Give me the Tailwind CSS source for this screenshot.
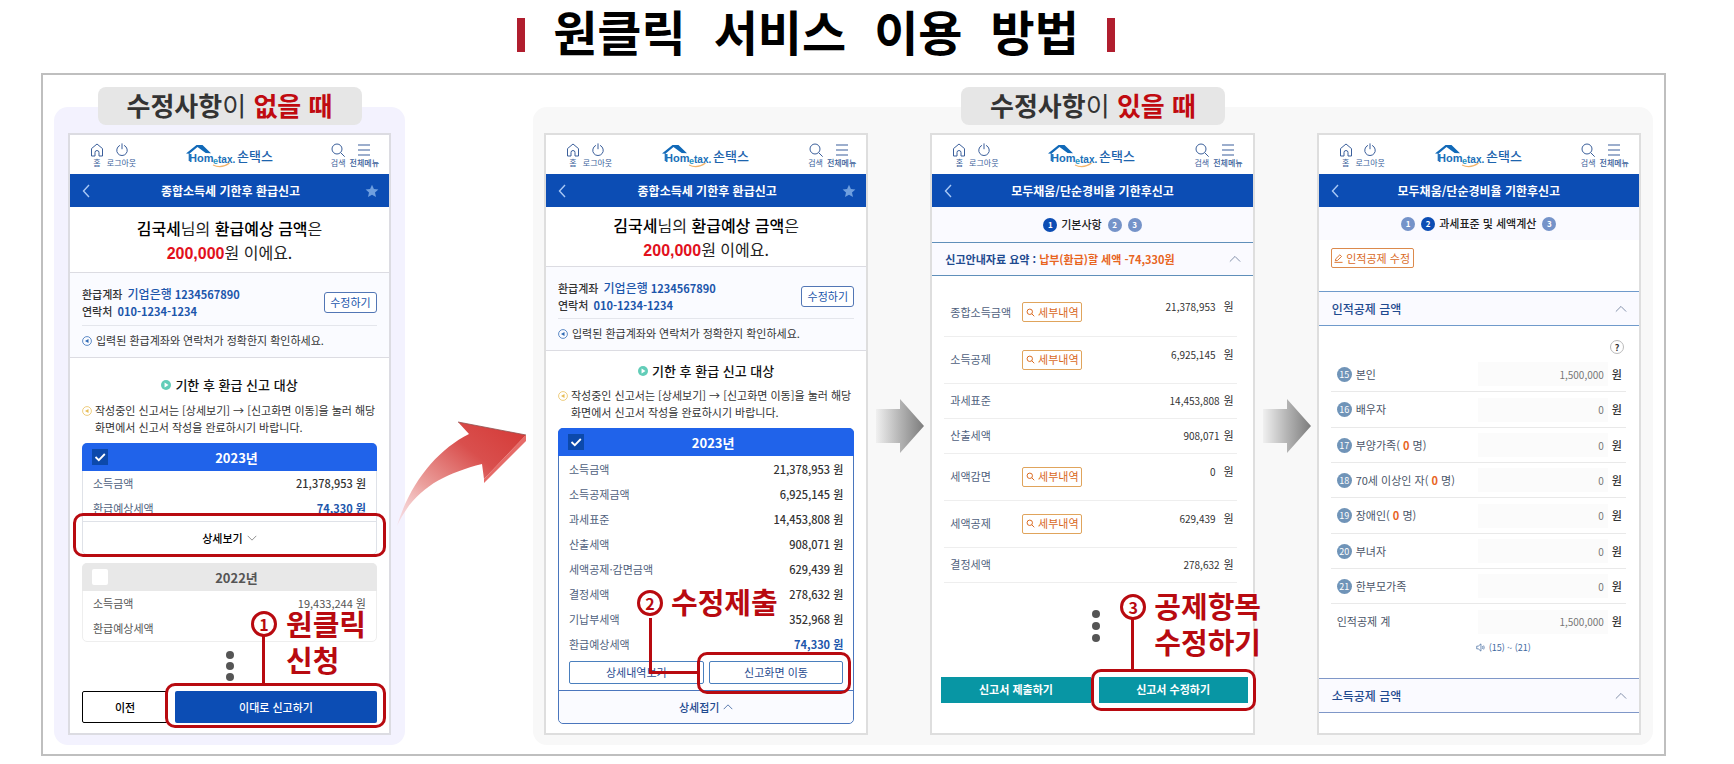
<!DOCTYPE html>
<html lang="ko">
<head>
<meta charset="utf-8">
<title>원클릭 서비스 이용 방법</title>
<script src="https://cdn.jsdelivr.net/npm/@tailwindcss/browser@4"></script>
</head>
<body class="bg-white text-[11px] leading-[17px] text-[#333] font-['Noto_Sans_CJK_KR',sans-serif]">

<svg class="hidden" aria-hidden="true">
  <symbol id="home" viewBox="0 0 14 14"><path d="M1.500 5.600 7 1l5.500 4.600V13H9V9.500a2 2 0 0 0-4 0V13H1.500z" fill="none" stroke="currentColor" stroke-linejoin="round"/></symbol>
  <symbol id="power" viewBox="0 0 14 14"><path d="M4.600 2.500a5.300 5.300 0 1 0 4.800 0M7 .8v5" fill="none" stroke="currentColor" stroke-linecap="round"/></symbol>
  <symbol id="search" viewBox="0 0 14 14"><circle cx="6" cy="6" r="5" fill="none" stroke="currentColor"/><path d="m9.700 9.700 4 4" stroke="currentColor" fill="none"/></symbol>
  <symbol id="menu" viewBox="0 0 14 14"><path d="M1 2h12M1 7h12M1 12h12" stroke="currentColor" stroke-width="1.200" fill="none"/></symbol>
  <symbol id="back" viewBox="0 0 8 14"><path d="M7 1 1.500 7 7 13" fill="none" stroke="currentColor" stroke-width="1.400"/></symbol>
  <symbol id="star" viewBox="0 0 14 14"><path d="m7 .8 1.900 4.200 4.500.5-3.400 3 1 4.600L7 10.700l-4 2.400 1-4.600-3.400-3 4.500-.5z" fill="currentColor"/></symbol>
  <symbol id="up" viewBox="0 0 14 8"><path d="m1 7 6-6 6 6" fill="none" stroke="currentColor"/></symbol>
  <symbol id="info" viewBox="0 0 12 12"><circle cx="6" cy="6" r="5.300" fill="none" stroke="currentColor" stroke-width=".9"/><path d="M7.800 3.600v4.800L3.600 6z" fill="currentColor"/></symbol>
  <symbol id="play" viewBox="0 0 12 12"><circle cx="6" cy="6" r="6" fill="currentColor"/><path d="M4.300 3v6L9 6z" fill="#fff"/></symbol>
  <symbol id="lens" viewBox="0 0 10 10"><circle cx="4.200" cy="4.200" r="3" fill="none" stroke="currentColor" stroke-width="1.100"/><path d="m6.400 6.400 2.800 2.800" stroke="currentColor" stroke-width="1.100"/></symbol>
  <symbol id="tick" viewBox="0 0 16 16"><path d="m3.500 8 3.300 3.200 6-6.200" fill="none" stroke="#fff" stroke-width="1.800"/></symbol>
  <symbol id="logo" viewBox="0 0 88 24">
    <path d="M0 9.500 10.500 1h6L25 9.300l-5.300-.4-8.200-6L3.400 9.700z" fill="#1169b8"/>
    <path d="M3.300 9.500V17" stroke="#1169b8" stroke-width="1.200"/>
    <path d="M27 21q8.500 4 16.500-2" fill="none" stroke="#f3b36b" stroke-width="1.200"/>
    <text y="17.500" x="3" font-family="Liberation Sans, sans-serif" font-weight="700" font-size="11" fill="#1a6fb8">Hom</text>
    <text y="20" x="27" font-family="Liberation Sans, sans-serif" font-weight="700" font-size="9" fill="#1f93c4">e</text>
    <text y="18.500" x="32" font-family="Liberation Sans, sans-serif" font-weight="700" font-size="10" fill="#1a6fb8">tax.</text>
    <text y="16.500" x="51" font-family="Noto Sans CJK KR, sans-serif" font-weight="500" font-size="13" fill="#1d64ad">손택스</text>
  </symbol>
</svg>

<h1 class="flex h-[73px] items-start justify-center gap-7 pr-[102px] text-[48px] leading-[60px] font-bold text-black">
  <span class="mt-[18px] h-[34px] w-2 bg-[#b01e2e]" aria-hidden="true"></span>
  <span>원클릭</span> <span>서비스</span> <span>이용</span> <span>방법</span>
  <span class="mt-[18px] h-[34px] w-2 bg-[#b01e2e]" aria-hidden="true"></span>
</h1>

<main class="ml-[41px] mr-[68px] flex border-2 border-[#bfbfbf] px-[11px] pt-3 pb-[9px]">

  <!-- Nothing to correct -->
  <section class="flex min-w-0 flex-[351] flex-col">
    <h2 class="relative z-10 -mb-[18px] flex h-[38px] w-[264px] items-center justify-center self-center rounded-lg bg-[#e6e6e6] pb-1 text-[26px] font-bold text-[#333]"><span>수정사항<span class="font-normal">이</span> <span class="text-[#c00a10]">없을 때</span></span></h2>
    <div class="flex flex-1 rounded-[14px] bg-[#f3f2fe] px-[14px] pt-[26px] pb-[10px]">

      <article class="relative min-w-0 flex-1 border-2 border-[#dcdce2] bg-white">
        <header class="grid h-[39px] grid-cols-[1fr_auto_1fr] text-[8px] leading-[10px] text-[#3b5f9b]">
          <div class="flex items-start pt-2 pl-[18px]">
            <button class="flex w-[18px] flex-col items-center gap-px"><svg class="size-[14px]"><use href="#home"/></svg>홈</button>
            <button class="flex w-[31px] flex-col items-center gap-px"><svg class="size-[14px]"><use href="#power"/></svg>로그아웃</button>
          </div>
          <svg class="mt-[9px] h-6 w-[88px]" role="img" aria-label="Hometax 손택스"><use href="#logo"/></svg>
          <div class="flex items-start justify-end gap-1 pt-2 pr-[10px]">
            <button class="flex flex-col items-center gap-px"><svg class="size-[14px]"><use href="#search"/></svg>검색</button>
            <button class="flex flex-col items-center gap-px font-medium"><svg class="size-[14px]"><use href="#menu"/></svg>전체메뉴</button>
          </div>
        </header>
        <div class="flex h-[33px] items-center justify-between bg-[#0c4db4] pr-[10px] pl-3 text-white">
          <button class="w-[14px] text-[#a9c8f5]" aria-label="뒤로"><svg class="h-[14px] w-2"><use href="#back"/></svg></button>
          <h3 class="text-xs font-bold">종합소득세 기한후 환급신고</h3>
          <button class="text-[#6f9fdf]" aria-label="즐겨찾기"><svg class="size-[14px]"><use href="#star"/></svg></button>
        </div>
        <p class="h-[66px] border-b border-[#dcdce2] pt-[9px] text-center text-base leading-6 text-[#222]"><b class="font-medium text-black">김국세</b>님의 <b class="font-medium text-black">환급예상 금액</b>은<br><b class="font-['Liberation_Sans',sans-serif] text-[#e2101c]">200,000</b>원 이에요.</p>
        <div class="border-b border-[#dcdce2] bg-[#fafbff] px-3 pt-3 pb-2">
          <div class="flex items-center justify-between border-b border-[#e4e6ec] pb-[5px]">
            <p class="font-medium">환급계좌 <b class="ml-[2px] text-[#1c56ab]"><span class="text-xs leading-[17px] font-medium">기업은행</span> 1234567890</b><br>연락처 <b class="ml-[2px] text-[#1c56ab]">010-1234-1234</b></p>
            <button class="h-[21px] w-[53px] rounded-[3px] border border-[#5276b5] bg-white text-[#1c56ab]">수정하기</button>
          </div>
          <p class="flex items-center gap-1 pt-[6px]"><svg class="size-[10px] text-[#2c68b4]"><use href="#info"/></svg>입력된 환급계좌와 연락처가 정확한지 확인하세요.</p>
        </div>
        <div class="px-3 pb-[10px]">
          <h4 class="mt-[17px] flex items-center justify-center gap-1 text-[13px] leading-5 font-medium text-[#111]"><svg class="size-[10px] text-[#62cdb8]"><use href="#play"/></svg>기한 후 환급 신고 대상</h4>
          <p class="mt-[7px] flex gap-[3px] whitespace-nowrap"><svg class="mt-[4px] size-[10px] shrink-0 text-[#e8bd55]"><use href="#info"/></svg><span>작성중인 신고서는 [상세보기] → [신고화면 이동]을 눌러 해당<br>화면에서 신고서 작성을 완료하시기 바랍니다.</span></p>

          <div class="mt-[7px] rounded-[5px] border border-[#dfe2e8]">
            <div class="relative -mx-px -mt-px flex h-7 items-center justify-center rounded-t-[5px] bg-[#2063ea] pl-[14px] text-[13px] font-bold text-white">
              <input type="checkbox" checked aria-label="2023년" class="absolute left-[10px] size-4 appearance-none bg-[#0c49ab]"><svg class="pointer-events-none absolute left-[10px] size-4"><use href="#tick"/></svg>2023년
            </div>
            <table class="w-full">
              <tr class="h-[25px]"><th class="pl-[10px] text-left font-normal text-[#4f5f7d]">소득금액</th><td class="pr-[10px] text-right font-medium">21,378,953 원</td></tr>
              <tr class="h-[25px]"><th class="pl-[10px] text-left font-normal text-[#4f5f7d]">환급예상세액</th><td class="pr-[10px] text-right font-bold text-[#1c56ab]">74,330 원</td></tr>
            </table>
            <button class="flex h-[33px] w-full items-center justify-center gap-1 border-t border-[#dfe2e8] font-medium text-black">상세보기 <svg class="h-[6px] w-[10px] rotate-180 text-[#666]"><use href="#up"/></svg></button>
          </div>

          <div class="mt-2 rounded-[5px] border border-[#eeeeee] text-[#555]">
            <div class="relative -mx-px -mt-px flex h-7 items-center justify-center rounded-t-[5px] bg-[#e8e8e8] pl-[14px] text-[13px] font-bold">
              <input type="checkbox" aria-label="2022년" class="absolute left-[10px] size-4 appearance-none rounded-[2px] bg-white">2022년
            </div>
            <table class="w-full">
              <tr class="h-[25px]"><th class="pl-[10px] text-left font-normal">소득금액</th><td class="pr-[10px] text-right">19,433,244 원</td></tr>
              <tr class="h-[25px]"><th class="pl-[10px] text-left font-normal">환급예상세액</th><td></td></tr>
            </table>
          </div>
          <div class="mt-[9px] flex flex-col items-center gap-[3px]"><i class="size-2 rounded-full bg-[#555]"></i><i class="size-2 rounded-full bg-[#555]"></i><i class="size-2 rounded-full bg-[#555]"></i></div>
          <div class="mt-[10px] flex h-8 gap-[7px] font-medium">
            <button class="w-[86px] rounded-[2px] border border-black text-black">이전</button>
            <button class="flex-1 rounded-[2px] bg-[#0c4db4] text-white">이대로 신고하기</button>
          </div>
        </div>

        <div class="absolute top-[378px] right-[3px] left-[3px] h-[44px] rounded-[10px] border-[3px] border-[#b80a10]"></div>
        <div class="absolute top-[548px] right-[3px] left-[95px] h-[45px] rounded-[10px] border-[3px] border-[#b80a10]"></div>
        <div class="absolute top-[501px] left-[192px] h-[48px] w-[3px] bg-[#b80a10]"></div>
        <div class="absolute top-[476px] left-[181px] flex size-[26px] items-center justify-center rounded-full border-[3px] border-[#b80a10] bg-white text-base font-bold text-[#b80a10]">1</div>
        <p class="absolute top-[470px] left-[216px] text-[29px] leading-9 font-bold whitespace-nowrap text-[#b80a10] [text-shadow:0_0_3px_white,0_0_2px_white]">원클릭<br>신청</p>
      </article>
    </div>
  </section>

  <!-- Arrow between the two cases -->
  <div class="relative flex-[128]">
    <svg class="absolute top-[334px] -left-[9px] h-[105px] w-[132px]" viewBox="396 421 132 105">
      <defs><linearGradient id="red" x1="0" y1="1" x2="1" y2="0"><stop offset="0" stop-color="#f7d4d8" stop-opacity=".6"/><stop offset=".3" stop-color="#eba09d"/><stop offset=".65" stop-color="#d94f4d"/><stop offset="1" stop-color="#d43835"/></linearGradient></defs>
      <path d="M526 435v6l-42 42v-4z" fill="#e66b68"/>
      <path d="M397 526C410 483 437 450 469 434L458 422l68 13-42 44-2-15C443 474 414 489 397 526z" fill="url(#red)"/>
      <path d="M458 422l68 13" stroke="#8e5250" stroke-width=".8"/>
    </svg>
  </div>

  <!-- Something to correct -->
  <section class="flex min-w-0 flex-[1120] flex-col">
    <h2 class="relative z-10 -mb-[18px] flex h-[38px] w-[264px] items-center justify-center self-center rounded-lg bg-[#e6e6e6] pb-1 text-[26px] font-bold text-[#333]"><span>수정사항<span class="font-normal">이</span> <span class="text-[#c00a10]">있을 때</span></span></h2>
    <div class="flex flex-1 rounded-[14px] bg-[#f8f8f8] pt-[26px] pr-3 pb-[10px] pl-[11px]">

      <article class="relative min-w-0 flex-1 border-2 border-[#dedede] bg-white">
        <header class="grid h-[39px] grid-cols-[1fr_auto_1fr] text-[8px] leading-[10px] text-[#3b5f9b]">
          <div class="flex items-start pt-2 pl-[18px]">
            <button class="flex w-[18px] flex-col items-center gap-px"><svg class="size-[14px]"><use href="#home"/></svg>홈</button>
            <button class="flex w-[31px] flex-col items-center gap-px"><svg class="size-[14px]"><use href="#power"/></svg>로그아웃</button>
          </div>
          <svg class="mt-[9px] h-6 w-[88px]" role="img" aria-label="Hometax 손택스"><use href="#logo"/></svg>
          <div class="flex items-start justify-end gap-1 pt-2 pr-[10px]">
            <button class="flex flex-col items-center gap-px"><svg class="size-[14px]"><use href="#search"/></svg>검색</button>
            <button class="flex flex-col items-center gap-px font-medium"><svg class="size-[14px]"><use href="#menu"/></svg>전체메뉴</button>
          </div>
        </header>
        <div class="flex h-[33px] items-center justify-between bg-[#0c4db4] pr-[10px] pl-3 text-white">
          <button class="w-[14px] text-[#a9c8f5]" aria-label="뒤로"><svg class="h-[14px] w-2"><use href="#back"/></svg></button>
          <h3 class="text-xs font-bold">종합소득세 기한후 환급신고</h3>
          <button class="text-[#6f9fdf]" aria-label="즐겨찾기"><svg class="size-[14px]"><use href="#star"/></svg></button>
        </div>
        <p class="h-[60px] border-b border-[#dcdce2] pt-[6px] text-center text-base leading-6 text-[#222]"><b class="font-medium text-black">김국세</b>님의 <b class="font-medium text-black">환급예상 금액</b>은<br><b class="font-['Liberation_Sans',sans-serif] text-[#e2101c]">200,000</b>원 이에요.</p>
        <div class="border-b border-[#dcdce2] bg-[#fafbff] px-3 pt-3 pb-2">
          <div class="flex items-center justify-between border-b border-[#e4e6ec] pb-1">
            <p class="font-medium">환급계좌 <b class="ml-[2px] text-[#1c56ab]"><span class="text-xs leading-[17px] font-medium">기업은행</span> 1234567890</b><br>연락처 <b class="ml-[2px] text-[#1c56ab]">010-1234-1234</b></p>
            <button class="h-[21px] w-[53px] rounded-[3px] border border-[#5276b5] bg-white text-[#1c56ab]">수정하기</button>
          </div>
          <p class="flex items-center gap-1 pt-[6px]"><svg class="size-[10px] text-[#2c68b4]"><use href="#info"/></svg>입력된 환급계좌와 연락처가 정확한지 확인하세요.</p>
        </div>
        <div class="px-3 pb-[9px]">
          <h4 class="mt-[10px] flex items-center justify-center gap-1 text-[13px] leading-5 font-medium text-[#111]"><svg class="size-[10px] text-[#62cdb8]"><use href="#play"/></svg>기한 후 환급 신고 대상</h4>
          <p class="mt-[6px] flex gap-[3px] whitespace-nowrap"><svg class="mt-[4px] size-[10px] shrink-0 text-[#e8bd55]"><use href="#info"/></svg><span>작성중인 신고서는 [상세보기] → [신고화면 이동]을 눌러 해당<br>화면에서 신고서 작성을 완료하시기 바랍니다.</span></p>

          <div class="mt-[7px] rounded-[5px] border border-[#4a76bd]">
            <div class="relative -mx-px -mt-px mb-px flex h-7 items-center justify-center rounded-t-[5px] bg-[#2063ea] pl-[14px] text-[13px] font-bold text-white">
              <input type="checkbox" checked aria-label="2023년" class="absolute left-[10px] size-4 appearance-none bg-[#0c49ab]"><svg class="pointer-events-none absolute left-[10px] size-4"><use href="#tick"/></svg>2023년
            </div>
            <table class="w-full">
              <tr class="h-[25px]"><th class="pl-[10px] text-left font-normal text-[#4f5f7d]">소득금액</th><td class="pr-[10px] text-right font-medium">21,378,953 원</td></tr>
              <tr class="h-[25px]"><th class="pl-[10px] text-left font-normal text-[#4f5f7d]">소득공제금액</th><td class="pr-[10px] text-right font-medium">6,925,145 원</td></tr>
              <tr class="h-[25px]"><th class="pl-[10px] text-left font-normal text-[#4f5f7d]">과세표준</th><td class="pr-[10px] text-right font-medium">14,453,808 원</td></tr>
              <tr class="h-[25px]"><th class="pl-[10px] text-left font-normal text-[#4f5f7d]">산출세액</th><td class="pr-[10px] text-right font-medium">908,071 원</td></tr>
              <tr class="h-[25px]"><th class="pl-[10px] text-left font-normal text-[#4f5f7d]">세액공제·감면금액</th><td class="pr-[10px] text-right font-medium">629,439 원</td></tr>
              <tr class="h-[25px]"><th class="pl-[10px] text-left font-normal text-[#4f5f7d]">결정세액</th><td class="pr-[10px] text-right font-medium">278,632 원</td></tr>
              <tr class="h-[25px]"><th class="pl-[10px] text-left font-normal text-[#4f5f7d]">기납부세액</th><td class="pr-[10px] text-right font-medium">352,968 원</td></tr>
              <tr class="h-[25px]"><th class="pl-[10px] text-left font-normal text-[#4f5f7d]">환급예상세액</th><td class="pr-[10px] text-right font-bold text-[#1c56ab]">74,330 원</td></tr>
            </table>
            <div class="mt-1 flex gap-[5px] px-[10px] pb-[6px] text-[#1f4a8f]">
              <button class="h-[23px] flex-1 rounded-[2px] border border-[#4a7fbd]">상세내역보기</button>
              <button class="h-[23px] flex-1 rounded-[2px] border border-[#4a7fbd]">신고화면 이동</button>
            </div>
            <button class="flex h-[33px] w-full items-center justify-center gap-1 rounded-b-[5px] border-t border-[#4a76bd] bg-[#fafbff] font-medium text-[#1f4a8f]">상세접기 <svg class="h-[6px] w-[10px]"><use href="#up"/></svg></button>
          </div>
        </div>

        <div class="absolute top-[483px] left-[103px] h-[56px] w-[49px] border-b-[3px] border-l-[3px] border-[#b80a10]"></div>
        <div class="absolute top-[517px] right-[15px] left-[151px] h-[42px] rounded-[10px] border-[3px] border-[#b80a10]"></div>
        <div class="absolute top-[455px] left-[91px] flex size-[26px] items-center justify-center rounded-full border-[3px] border-[#b80a10] bg-white text-base font-bold text-[#b80a10]">2</div>
        <p class="absolute top-[448px] left-[125px] text-[29px] leading-9 font-bold whitespace-nowrap text-[#b80a10] [text-shadow:0_0_3px_white,0_0_2px_white]">수정제출</p>
      </article>

      <svg class="mt-[266px] h-[56px] w-[62px] shrink-0" viewBox="0 0 62 56" aria-hidden="true">
        <defs><linearGradient id="grey"><stop offset="0" stop-color="#f0f0f0"/><stop offset=".5" stop-color="#b4b4b4"/><stop offset="1" stop-color="#7c7c7c"/></linearGradient></defs>
        <path d="M8 10h24V0l24 27-24 27V44H8z" fill="url(#grey)"/>
      </svg>

      <article class="relative min-w-0 flex-1 border-2 border-[#dedede] bg-white">
        <header class="grid h-[39px] grid-cols-[1fr_auto_1fr] text-[8px] leading-[10px] text-[#3b5f9b]">
          <div class="flex items-start pt-2 pl-[18px]">
            <button class="flex w-[18px] flex-col items-center gap-px"><svg class="size-[14px]"><use href="#home"/></svg>홈</button>
            <button class="flex w-[31px] flex-col items-center gap-px"><svg class="size-[14px]"><use href="#power"/></svg>로그아웃</button>
          </div>
          <svg class="mt-[9px] h-6 w-[88px]" role="img" aria-label="Hometax 손택스"><use href="#logo"/></svg>
          <div class="flex items-start justify-end gap-1 pt-2 pr-[10px]">
            <button class="flex flex-col items-center gap-px"><svg class="size-[14px]"><use href="#search"/></svg>검색</button>
            <button class="flex flex-col items-center gap-px font-medium"><svg class="size-[14px]"><use href="#menu"/></svg>전체메뉴</button>
          </div>
        </header>
        <div class="flex h-[33px] items-center justify-between bg-[#0c4db4] px-3 text-white">
          <button class="w-[14px] text-[#a9c8f5]" aria-label="뒤로"><svg class="h-[14px] w-2"><use href="#back"/></svg></button>
          <h3 class="text-xs font-bold">모두채움/단순경비율 기한후신고</h3>
          <span class="w-[14px]"></span>
        </div>
        <ol class="flex h-[35px] items-center justify-center bg-[#fafaff] text-[8px] text-white">
          <li class="flex items-center gap-1"><b class="flex size-[14px] items-center justify-center rounded-full bg-[#0c4db4]">1</b><span class="text-[11px] font-medium text-[#222]">기본사항</span></li>
          <li class="ml-[6px] flex size-[14px] items-center justify-center rounded-full bg-[#7593c9] font-bold">2</li>
          <li class="ml-[6px] flex size-[14px] items-center justify-center rounded-full bg-[#7593c9] font-bold">3</li>
        </ol>
        <button class="flex h-[34px] w-full items-center justify-between border-y border-[#5f8fba] bg-[#fafaff] pr-3 pl-[13px] font-bold text-[#1f4a8f]"><span>신고안내자료 요약 : <span class="text-[#e8651f]">납부(환급)할 세액 -74,330원</span></span><svg class="h-2 w-3 text-[#6f7f9b]"><use href="#up"/></svg></button>
        <div class="pt-[13px] pr-4 pl-3">
          <table class="w-full text-[#333]">
            <tr class="h-[47px] border-b border-[#eeeeee]"><th class="w-[78px] pl-[6px] text-left font-normal text-[#4f5f7d]">종합소득금액</th><td><button class="flex h-5 w-[60px] items-center justify-center gap-[3px] rounded-[2px] border border-[#e0a45c] text-[#d9691e]"><svg class="size-[9px]"><use href="#lens"/></svg>세부내역</button></td><td class="pt-[9px] pr-[3px] text-right align-top"><span class="mr-2 text-[10px]">21,378,953</span>원</td></tr>
            <tr class="h-[47px] border-b border-[#eeeeee]"><th class="pl-[6px] text-left font-normal text-[#4f5f7d]">소득공제</th><td><button class="flex h-5 w-[60px] items-center justify-center gap-[3px] rounded-[2px] border border-[#e0a45c] text-[#d9691e]"><svg class="size-[9px]"><use href="#lens"/></svg>세부내역</button></td><td class="pt-[9px] pr-[3px] text-right align-top"><span class="mr-2 text-[10px]">6,925,145</span>원</td></tr>
            <tr class="h-[35px] border-b border-[#eeeeee]"><th class="pl-[6px] text-left font-normal text-[#4f5f7d]">과세표준</th><td></td><td class="pr-[3px] text-right"><span class="mr-1 text-[10px]">14,453,808</span>원</td></tr>
            <tr class="h-[35px] border-b border-[#eeeeee]"><th class="pl-[6px] text-left font-normal text-[#4f5f7d]">산출세액</th><td></td><td class="pr-[3px] text-right"><span class="mr-1 text-[10px]">908,071</span>원</td></tr>
            <tr class="h-[47px] border-b border-[#eeeeee]"><th class="pl-[6px] text-left font-normal text-[#4f5f7d]">세액감면</th><td><button class="flex h-5 w-[60px] items-center justify-center gap-[3px] rounded-[2px] border border-[#e0a45c] text-[#d9691e]"><svg class="size-[9px]"><use href="#lens"/></svg>세부내역</button></td><td class="pt-[9px] pr-[3px] text-right align-top"><span class="mr-2 text-[10px]">0</span>원</td></tr>
            <tr class="h-[47px] border-b border-[#eeeeee]"><th class="pl-[6px] text-left font-normal text-[#4f5f7d]">세액공제</th><td><button class="flex h-5 w-[60px] items-center justify-center gap-[3px] rounded-[2px] border border-[#e0a45c] text-[#d9691e]"><svg class="size-[9px]"><use href="#lens"/></svg>세부내역</button></td><td class="pt-[9px] pr-[3px] text-right align-top"><span class="mr-2 text-[10px]">629,439</span>원</td></tr>
            <tr class="h-[35px] border-b border-[#eeeeee]"><th class="pl-[6px] text-left font-normal text-[#4f5f7d]">결정세액</th><td></td><td class="pr-[3px] text-right"><span class="mr-1 text-[10px]">278,632</span>원</td></tr>
          </table>
        </div>
        <div class="mt-[27px] ml-2 flex flex-col items-center gap-1"><i class="size-2 rounded-full bg-[#555]"></i><i class="size-2 rounded-full bg-[#555]"></i><i class="size-2 rounded-full bg-[#555]"></i></div>
        <div class="mt-[35px] flex gap-2 pr-[5px] pl-[9px] font-bold text-white">
          <button class="h-[26px] flex-1 bg-[#0896a4]">신고서 제출하기</button>
          <button class="h-[26px] flex-1 bg-[#0896a4]">신고서 수정하기</button>
        </div>

        <div class="absolute top-[534px] -right-[3px] left-[159px] h-[42px] rounded-[10px] border-[3px] border-[#b80a10]"></div>
        <div class="absolute top-[484px] left-[199px] h-[51px] w-[3px] bg-[#b80a10]"></div>
        <div class="absolute top-[459px] left-[188px] flex size-[26px] items-center justify-center rounded-full border-[3px] border-[#b80a10] bg-white text-base font-bold text-[#b80a10]">3</div>
        <p class="absolute top-[452px] left-[222px] z-10 text-[29px] leading-9 font-bold whitespace-nowrap text-[#b80a10] [text-shadow:0_0_3px_white,0_0_2px_white]">공제항목<br>수정하기</p>
      </article>

      <svg class="mt-[266px] h-[56px] w-[62px] shrink-0" viewBox="0 0 62 56" aria-hidden="true">
        <path d="M8 10h24V0l24 27-24 27V44H8z" fill="url(#grey)"/>
      </svg>

      <article class="relative min-w-0 flex-1 border-2 border-[#dedede] bg-white">
        <header class="grid h-[39px] grid-cols-[1fr_auto_1fr] text-[8px] leading-[10px] text-[#3b5f9b]">
          <div class="flex items-start pt-2 pl-[18px]">
            <button class="flex w-[18px] flex-col items-center gap-px"><svg class="size-[14px]"><use href="#home"/></svg>홈</button>
            <button class="flex w-[31px] flex-col items-center gap-px"><svg class="size-[14px]"><use href="#power"/></svg>로그아웃</button>
          </div>
          <svg class="mt-[9px] h-6 w-[88px]" role="img" aria-label="Hometax 손택스"><use href="#logo"/></svg>
          <div class="flex items-start justify-end gap-1 pt-2 pr-[10px]">
            <button class="flex flex-col items-center gap-px"><svg class="size-[14px]"><use href="#search"/></svg>검색</button>
            <button class="flex flex-col items-center gap-px font-medium"><svg class="size-[14px]"><use href="#menu"/></svg>전체메뉴</button>
          </div>
        </header>
        <div class="flex h-[33px] items-center justify-between bg-[#0c4db4] px-3 text-white">
          <button class="w-[14px] text-[#a9c8f5]" aria-label="뒤로"><svg class="h-[14px] w-2"><use href="#back"/></svg></button>
          <h3 class="text-xs font-bold">모두채움/단순경비율 기한후신고</h3>
          <span class="w-[14px]"></span>
        </div>
        <ol class="flex h-[33px] items-center justify-center bg-[#fafaff] text-[8px] text-white">
          <li class="flex size-[14px] items-center justify-center rounded-full bg-[#7593c9] font-bold">1</li>
          <li class="ml-[6px] flex items-center gap-1"><b class="flex size-[14px] items-center justify-center rounded-full bg-[#0c4db4]">2</b><span class="text-[11px] font-medium text-[#222]">과세표준 및 세액계산</span></li>
          <li class="ml-[6px] flex size-[14px] items-center justify-center rounded-full bg-[#7593c9] font-bold">3</li>
        </ol>
        <button class="mt-2 ml-3 flex h-5 w-[83px] items-center justify-center gap-[3px] rounded-[2px] border border-[#dc8a4c] text-[#d9691e]"><svg class="size-[9px]" viewBox="0 0 10 10"><path d="M1.500 7.500 2 5.300 6.500.9l1.900 1.800L3.900 7.200zM.5 9.300h9" fill="none" stroke="currentColor"/></svg>인적공제 수정</button>
        <button class="mt-[23px] flex h-[35px] w-full items-center justify-between border-y border-[#6f9acb] bg-[#fafaff] pr-3 pl-[13px] text-xs font-medium text-[#1f4a8f]">인적공제 금액<svg class="h-2 w-3 text-[#6f7f9b]"><use href="#up"/></svg></button>
        <div class="pr-[13px] pl-3">
          <button class="mt-[14px] mr-[2px] mb-[3px] ml-auto flex size-[14px] items-center justify-center rounded-full border border-[#bbb] text-[9px] font-bold" aria-label="도움말">?</button>
          <div class="flex h-[35px] items-center border-b border-[#e9e9e9] pr-1 pl-[6px]"><b class="mr-1 flex size-[15px] items-center justify-center rounded-full bg-[#7094b8] text-[9px] font-normal text-white">15</b><label for="a15" class="flex-1 text-[#4a5568]">본인</label><input id="a15" readonly value="1,500,000" class="mr-1 h-6 w-[130px] bg-[#fbfbfb] pr-1 text-right text-[10px] text-[#777]"><span class="font-medium">원</span></div>
          <div class="flex h-[36px] items-center border-b border-[#e9e9e9] pr-1 pl-[6px]"><b class="mr-1 flex size-[15px] items-center justify-center rounded-full bg-[#7094b8] text-[9px] font-normal text-white">16</b><label for="a16" class="flex-1 text-[#4a5568]">배우자</label><input id="a16" readonly value="0" class="mr-1 h-6 w-[130px] bg-[#fbfbfb] pr-1 text-right text-[10px] text-[#777]"><span class="font-medium">원</span></div>
          <div class="flex h-[35px] items-center border-b border-[#e9e9e9] pr-1 pl-[6px]"><b class="mr-1 flex size-[15px] items-center justify-center rounded-full bg-[#7094b8] text-[9px] font-normal text-white">17</b><label for="a17" class="flex-1 text-[#4a5568]">부양가족( <b class="text-[#e8651f]">0</b> 명)</label><input id="a17" readonly value="0" class="mr-1 h-6 w-[130px] bg-[#fbfbfb] pr-1 text-right text-[10px] text-[#777]"><span class="font-medium">원</span></div>
          <div class="flex h-[35px] items-center border-b border-[#e9e9e9] pr-1 pl-[6px]"><b class="mr-1 flex size-[15px] items-center justify-center rounded-full bg-[#7094b8] text-[9px] font-normal text-white">18</b><label for="a18" class="flex-1 text-[#4a5568]">70세 이상인 자( <b class="text-[#e8651f]">0</b> 명)</label><input id="a18" readonly value="0" class="mr-1 h-6 w-[130px] bg-[#fbfbfb] pr-1 text-right text-[10px] text-[#777]"><span class="font-medium">원</span></div>
          <div class="flex h-[36px] items-center border-b border-[#e9e9e9] pr-1 pl-[6px]"><b class="mr-1 flex size-[15px] items-center justify-center rounded-full bg-[#7094b8] text-[9px] font-normal text-white">19</b><label for="a19" class="flex-1 text-[#4a5568]">장애인( <b class="text-[#e8651f]">0</b> 명)</label><input id="a19" readonly value="0" class="mr-1 h-6 w-[130px] bg-[#fbfbfb] pr-1 text-right text-[10px] text-[#777]"><span class="font-medium">원</span></div>
          <div class="flex h-[35px] items-center border-b border-[#e9e9e9] pr-1 pl-[6px]"><b class="mr-1 flex size-[15px] items-center justify-center rounded-full bg-[#7094b8] text-[9px] font-normal text-white">20</b><label for="a20" class="flex-1 text-[#4a5568]">부녀자</label><input id="a20" readonly value="0" class="mr-1 h-6 w-[130px] bg-[#fbfbfb] pr-1 text-right text-[10px] text-[#777]"><span class="font-medium">원</span></div>
          <div class="flex h-[35px] items-center border-b border-[#e9e9e9] pr-1 pl-[6px]"><b class="mr-1 flex size-[15px] items-center justify-center rounded-full bg-[#7094b8] text-[9px] font-normal text-white">21</b><label for="a21" class="flex-1 text-[#4a5568]">한부모가족</label><input id="a21" readonly value="0" class="mr-1 h-6 w-[130px] bg-[#fbfbfb] pr-1 text-right text-[10px] text-[#777]"><span class="font-medium">원</span></div>
          <div class="flex h-[35px] items-center pr-1 pl-[6px]"><label for="sum" class="flex-1 text-[#4a5568]">인적공제 계</label><input id="sum" readonly value="1,500,000" class="mr-1 h-6 w-[130px] bg-[#fbfbfb] pr-1 text-right text-[10px] text-[#777]"><span class="font-medium">원</span></div>
          <p class="ml-[145px] flex items-center gap-1 text-[9px] text-[#41699f]"><svg class="size-[9px]" viewBox="0 0 10 10"><path d="M.8 3.500h1.700L5.500 1v8L2.500 6.500H.8zM7 3.500q1 1.500 0 3M8.500 2.800q1.200 2.200 0 4.400" fill="none" stroke="currentColor" stroke-width=".8"/></svg>(15) ~ (21)</p>
        </div>
        <button class="mt-[22px] mb-[17px] flex h-[35px] w-full items-center justify-between border-y border-[#7f97c8] bg-[#fafaff] pr-3 pl-[13px] text-xs font-medium text-[#1f4a8f]">소득공제 금액<svg class="h-2 w-3 text-[#6f7f9b]"><use href="#up"/></svg></button>
      </article>
    </div>
  </section>
</main>
</body>
</html>
